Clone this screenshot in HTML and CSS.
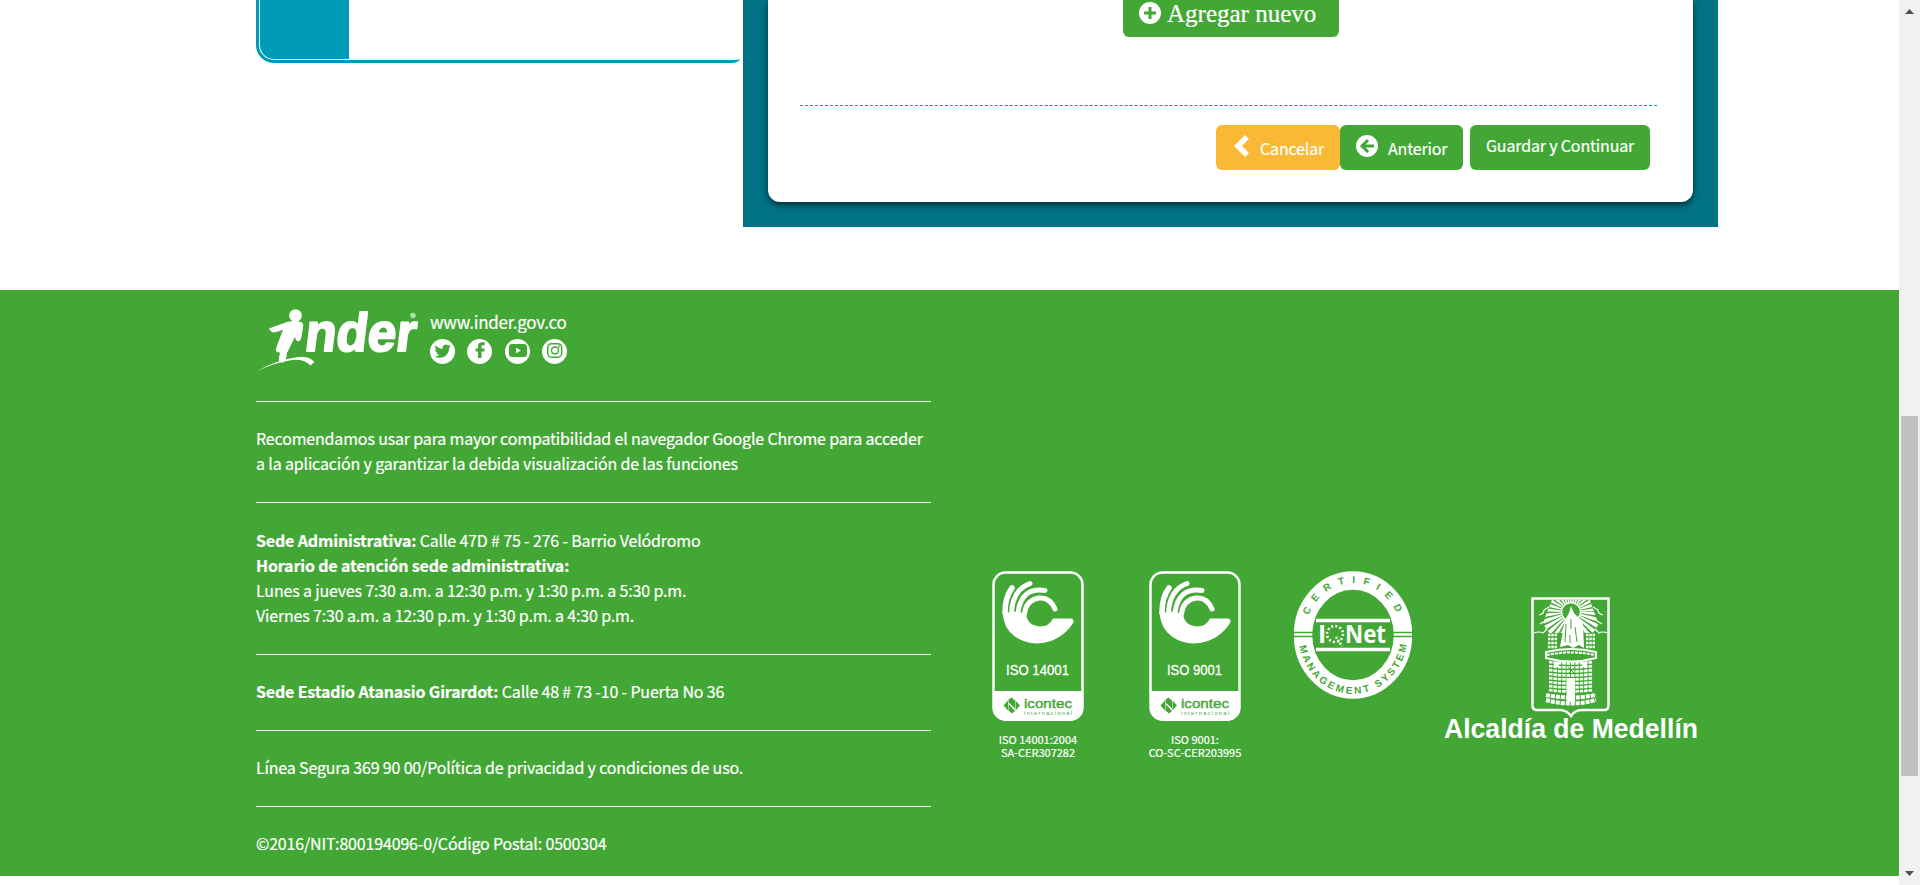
FILE: index.html
```html
<!DOCTYPE html>
<html lang="es">
<head>
<meta charset="utf-8">
<title>Inder Medellín</title>
<link rel="stylesheet" href="styles.css">
</head>
<body>
<div class="page">
  <main class="main">
    <aside class="steps"><div class="steps-box"><div class="steps-tab"></div></div></aside>
    <section class="panel">
      <div class="card">
        <div class="add-row">
          <button class="btn btn-add">
            <svg class="ico" viewBox="0 0 22 22"><circle cx="11" cy="11" r="11" fill="#fff"/><path d="M11 5v12M5 11h12" stroke="#43a736" stroke-width="3"/></svg>
            <span class="t-add">Agregar nuevo</span>
          </button>
        </div>
        <div class="actions">
          <button class="btn btn-cancel">
            <svg class="chev" viewBox="0 0 16 24"><path d="M13 3L4 12l9 9" fill="none" stroke="#fff" stroke-width="5.500"/></svg>
            <span>Cancelar</span>
          </button>
          <button class="btn btn-prev">
            <svg class="ico" viewBox="0 0 22 22"><circle cx="11" cy="11" r="11" fill="#fff"/><path d="M18 11H6M12 5l-6 6 6 6" fill="none" stroke="#43a736" stroke-width="3"/></svg>
            <span>Anterior</span>
          </button>
          <button class="btn btn-save"><span>Guardar y Continuar</span></button>
        </div>
      </div>
    </section>
  </main>
  <footer class="footer">
    <div class="info">
      <div class="brand">
        <svg class="logo" viewBox="0 0 160 64">
          <text transform="translate(47.500 41.500) skewX(-7)" class="logo-name" textLength="111" lengthAdjust="spacingAndGlyphs">nder</text>
          <circle cx="39.500" cy="6.500" r="6.300" fill="#fff"/>
          <path d="M13 22q0-3 4-4l14-5q8-2 14 0 3 1 2 6l-2 11q-2 4-5 1l-1-3-8 16q-1 9-4 9.500-5 .5-4-5l1-5q-5 0-4-4l7-19q-6 3-10 3-3-1-4-5.500z" fill="#fff"/>
          <path d="M0 62.500Q20 51 42 48q11-1 16.500 5l-4 3.500q-6-6.500-18-5.500Q20 53 0 62.500z" fill="#fff"/>
          <circle cx="157" cy="6.500" r="2.700" fill="#b5deaf"/>
        </svg>
        <div class="links">
          <span class="site">www.inder.gov.co</span>
          <div class="social">
            <svg viewBox="0 0 25 25"><circle cx="12.500" cy="12.500" r="12.500" fill="#fff"/><path transform="translate(4.500 4) scale(.68)" fill="#43a736" d="M23.950 4.570a10 10 0 0 1-2.820.780 4.960 4.960 0 0 0 2.160-2.730c-.950.560-2 .960-3.130 1.190a4.920 4.920 0 0 0-8.390 4.480C7.690 8.100 4.070 6.130 1.640 3.160a4.820 4.820 0 0 0-.670 2.480c0 1.710.870 3.210 2.190 4.100a4.900 4.900 0 0 1-2.230-.620v.060a4.920 4.920 0 0 0 3.950 4.830 5 5 0 0 1-2.210.090 4.940 4.940 0 0 0 4.600 3.420A9.870 9.870 0 0 1 0 19.540a13.990 13.990 0 0 0 7.550 2.210c9.050 0 14-7.500 14-13.980v-.640a9.940 9.940 0 0 0 2.400-2.560z"/></svg>
            <svg viewBox="0 0 25 25"><circle cx="12.500" cy="12.500" r="12.500" fill="#fff"/><path fill="#43a736" d="M11 19v-6.500H8.500V9.500H11V7.500c0-3 1.500-4.300 4-4.300h2.800v3H16c-1 0-1.500.500-1.500 1.400v1.900h3.200l-.400 3h-2.800V19z"/></svg>
            <svg viewBox="0 0 25 25"><circle cx="12.500" cy="12.500" r="12.500" fill="#fff"/><rect x="4" y="5" width="18" height="13" rx="3" fill="#43a736"/><path d="M11 8.800l5 2.700-5 2.800z" fill="#fff"/></svg>
            <svg viewBox="0 0 25 25"><circle cx="12.500" cy="12.500" r="12.500" fill="#fff"/><g fill="none" stroke="#43a736" stroke-width="1.500"><rect x="5.700" y="4.700" width="14" height="13.500" rx="4"/><circle cx="13" cy="11.500" r="3.500"/></g><circle cx="17" cy="7.500" r="1" fill="#43a736"/></svg>
          </div>
        </div>
      </div>
      <hr>
      <p>Recomendamos usar para mayor compatibilidad el navegador Google Chrome para acceder<br>a la aplicación y garantizar la debida visualización de las funciones</p>
      <hr>
      <p class="address"><b>Sede Administrativa:</b> Calle 47D # 75 - 276 - Barrio Velódromo<br><b>Horario de atención sede administrativa:</b><br>Lunes a jueves 7:30 a.m. a 12:30 p.m. y 1:30 p.m. a 5:30 p.m.<br>Viernes 7:30 a.m. a 12:30 p.m. y 1:30 p.m. a 4:30 p.m.</p>
      <hr>
      <p><b>Sede Estadio Atanasio Girardot:</b> Calle 48 # 73 -10 - Puerta No 36</p>
      <hr>
      <p>Línea Segura 369 90 00/Política de privacidad y condiciones de uso.</p>
      <hr>
      <p>©2016/NIT:800194096-0/Código Postal: 0500304</p>
    </div>
    <div class="certs">
      <div class="cert">
        <svg class="badge" viewBox="0 0 92 150">
          <defs>
            <g id="icontec">
              <rect x="1.500" y="1.500" width="89" height="147" rx="12" fill="none" stroke="#fff" stroke-width="2.500"/>
              <path d="M1 120h90v17q-1 12-13 13H14q-12-1-13-13z" fill="#fff"/>
              <path d="M10.500 41q1 17 13 25 12 8 27 6 19-3 30-19 3-5-2-5.500H61q-4 8-13 8-13-1-14-13l-6-1-6-1-6 1z" fill="#fff"/>
              <g fill="none" stroke="#fff" stroke-linecap="round">
                <path d="M20 17Q13 26 13 42" stroke-width="5.500"/>
                <path d="M38 12.500Q20 19 19.500 43" stroke-width="5"/>
                <path d="M53 19.500Q29 16 26 42" stroke-width="5"/>
                <path d="M63 38Q58 26 47 27 34 29 32.500 43" stroke-width="5"/>
              </g>
              <g fill="#43a736"><path d="M11.500 134.500l4.500-5v10zM28 134.500l-4.500-5v10z"/><path d="M16.500 128.500l3-2 3.500 3v8l-6.500-6zM16.500 133l6.500 7-3 2.500-3.500-3z"/></g>
            </g>
          </defs>
          <use href="#icontec"/>
          <text x="32" y="136.500" class="bt-name" textLength="48" lengthAdjust="spacingAndGlyphs">icontec</text>
          <text x="32" y="144" class="bt-sub" textLength="48">internacional</text>
          <text x="14" y="104" class="bt-iso" textLength="63" lengthAdjust="spacingAndGlyphs">ISO 14001</text>
        </svg>
        <span class="cap">ISO 14001:2004<br>SA-CER307282</span>
      </div>
      <div class="cert">
        <svg class="badge" viewBox="0 0 92 150">
          <use href="#icontec"/>
          <text x="32" y="136.500" class="bt-name" textLength="48" lengthAdjust="spacingAndGlyphs">icontec</text>
          <text x="32" y="144" class="bt-sub" textLength="48">internacional</text>
          <text x="18" y="104" class="bt-iso" textLength="55" lengthAdjust="spacingAndGlyphs">ISO 9001</text>
        </svg>
        <span class="cap">ISO 9001:<br>CO-SC-CER203995</span>
      </div>
      <svg class="iqnet" viewBox="0 0 118 128">
        <defs>
          <path id="arcTop" d="M11 64a48 52 0 0 1 96 0"/>
          <path id="arcBottom" d="M4.500 64a54.500 59 0 0 0 109 0"/>
        </defs>
        <ellipse cx="59" cy="64" rx="50" ry="54.500" fill="none" stroke="#fff" stroke-width="18.500"/>
        <path d="M0 61.500h19M0 65.500h19M99 61.500h19M99 65.500h19" stroke="#43a736" stroke-width="1.500"/>
        <path d="M22 49.500h74M22 78.500h74" stroke="#fff" stroke-width="3.500"/>
        <text class="ring"><textPath href="#arcTop" startOffset="20" textLength="114">CERTIFIED</textPath></text>
        <text class="ring"><textPath href="#arcBottom" startOffset="11" textLength="157">MANAGEMENT SYSTEM</textPath></text>
        <text x="24" y="72" class="iq">I</text>
        <text x="51" y="72" class="iq" textLength="41" lengthAdjust="spacingAndGlyphs">Net</text>
        <circle cx="41" cy="63" r="8" fill="none" stroke="#fff" stroke-width="2.500" stroke-dasharray="2 2.200"/>
        <path d="M42 66l6 9" stroke="#fff" stroke-width="2.500" stroke-dasharray="2 1.500"/>
      </svg>
      <svg class="city" viewBox="0 0 258 150">
        <defs><clipPath id="rays"><path d="M108 3h38l7 20 3 9-6 4H103l-5-4 3-12z"/></clipPath></defs>
        <g fill="none" stroke="#fff">
          <path d="M88.500 1.500h76v107q0 4-4 4.500h-22q-8 0-11.500 6-4-6-12-6h-22.500q-4-.5-4-4.500z" stroke-width="2.500"/>
          <circle cx="127" cy="15" r="20" stroke-width="20" stroke-dasharray="2.700 1.490" clip-path="url(#rays)"/>
          <circle cx="127" cy="15" r="9.500" stroke-width="1.500"/>
          <path d="M90 36q5-2 9 0l4-4M95 18q5-1 5-5l5-3M96 27l5-3M164 36q-6-2-9 0l-4-4M159 18q-5-1-5-5l-5-3M158 27l-5-3" stroke-width="1.200"/>
          <path d="M104 38h9M104 42h9M104 46h9M104 50h9M142 38h9M142 42h9M142 46h9M142 50h9" stroke-width="2.600" stroke-dasharray="2.500 .8"/>
          <path d="M102 55q25-6 50 0v6q-25 7-50 0z" stroke-width="2"/>
          <path d="M103 58q24-5 48 0" stroke-width="2" stroke-dasharray="3 1"/>
          <path d="M105 65q22 3 44 0M105 69q22 3 44 0M105 73q22 3 44 0M105 77q22 3 44 0M105 81q22 3 44 0M105 85q22 3 44 0M105 89q22 3 44 0M105 93q22 3 44 0" stroke-width="2.600" stroke-dasharray="3.500 .9"/>
          <path d="M102 98q25 5 50 0M102 103q25 7 50 0" stroke-width="4" stroke-dasharray="4 1"/>
        </g>
        <path d="M116 50l5-27 4-7 2-7 3 7 5 5 4 6 1 24-5-3-6 3-5-3zM110 65h5v5h-5zM138 65h5v5h-5zM122.500 81h8.500v24h-8.500z" fill="#fff"/>
        <path d="M122 27l-1 18M127 22v10M131 30l2 15M126 38v8M124 70l7 7M131 70l-7 7" stroke="#43a736" stroke-width="1"/>
        <text x="0" y="141.300" class="city-name" textLength="254" lengthAdjust="spacingAndGlyphs">Alcaldía de Medellín</text>
      </svg>
    </div>
  </footer>
</div>
<div class="scroll">
  <svg viewBox="0 0 9 5" width="9" height="5"><path d="M4.500 0L9 5H0z" fill="#505050"/></svg>
  <div class="thumb"></div>
  <svg viewBox="0 0 9 5" width="9" height="5"><path d="M0 0h9L4.500 5z" fill="#505050"/></svg>
</div>
</body>
</html>
```
FILE: styles.css
```css
* { box-sizing: border-box; }
body { margin: 0; width: 1920px; height: 885px; overflow: hidden; display: flex; background: #fff; font-family: "Noto Sans CJK JP", "Noto Sans CJK SC", sans-serif; font-size: 16px; color: #fff; }
svg { display: block; flex: none; }
.page { width: 1899px; }
.main { display: flex; height: 290px; padding-left: 256px; }
.steps { width: 487px; }
.steps-box { width: 484px; height: 63px; padding: 0 0 1px 1px; border: solid #009bb4; border-width: 0 0 3px 3px; border-radius: 0 0 9px 18px / 0 0 4px 18px; }
.steps-tab { width: 89px; height: 59px; background: #009bb4; border-bottom-left-radius: 14px; }
.panel { width: 975px; height: 227px; padding: 0 25px 25px; background: #007385; }
.card { height: 202px; padding: 0 36px 0 32px; background: #fff; border-radius: 0 0 12px 12px; box-shadow: 0 3px 6px rgba(0,0,0,.6); }
.add-row { height: 106px; padding-left: 323px; border-bottom: 1px dashed #009bb4; }
.btn { display: flex; border: 0; border-radius: 6px; background: #43a736; color: #fff; font: 16px/24px "Noto Sans CJK JP", sans-serif; letter-spacing: -.160px; -webkit-text-stroke: .2px #fff; white-space: nowrap; height: 45px; }
.btn-add { width: 216px; height: 37px; padding: 2px 0 0 16px; border-radius: 0 0 6px 6px; gap: 6px; }
.ico { width: 22px; height: 22px; }
.t-add { font: 25px/24px "Liberation Serif", serif; letter-spacing: 0; }
.actions { display: flex; justify-content: flex-end; padding: 19px 7px 0 0; }
.btn-cancel { width: 124px; padding: 9px 0 0 18px; gap: 10px; background: #f9b934; }
.btn-prev { width: 123px; padding: 10px 0 0 16px; gap: 10px; }
.btn-save { width: 180px; margin-left: 7px; padding: 8px 0 0 16px; }
.btn-cancel span { padding-top: 2px; }
.btn-prev span { padding-top: 1px; }
.chev { width: 16px; height: 24px; }
.footer { display: flex; height: 586px; padding-left: 256px; background: #43a736; -webkit-text-stroke: .2px #fff; }
.info { width: 675px; }
.info hr { height: 1px; margin: 25px 0; border: 0; background: #fff; }
.info p { margin: -1px 0 26px; font-size: 16px; line-height: 25.140px; letter-spacing: -.165px; white-space: nowrap; }
.info .address { margin: -.4px 0 25.400px; }
.brand { display: flex; height: 86px; padding-top: 19px; gap: 14px; }
.logo { width: 160px; height: 64px; overflow: visible; }
.logo-name { font: bold 54px/1 "Liberation Sans", sans-serif; fill: #fff; stroke: #fff; stroke-width: 2px; stroke-linejoin: round; -webkit-text-stroke: 2px #fff; }
.site { display: block; height: 30px; font-size: 17px; line-height: 25px; letter-spacing: -.280px; }
.social { display: flex; gap: 12.300px; }
.social svg { width: 25px; height: 25px; }
.certs { display: flex; padding: 281px 0 0 61px; }
.certs text { -webkit-text-stroke: 0; }
.cert { width: 92px; margin-right: 65px; display: flex; flex-direction: column; align-items: center; }
.badge { width: 92px; height: 150px; }
.cap { margin-top: 12px; font-size: 11px; line-height: 13px; text-align: center; white-space: nowrap; }
.bt-name { font: 13px/1 "Liberation Sans", sans-serif; fill: #43a736; stroke: #43a736; stroke-width: .4px; }
.bt-sub { font: 5.500px/1 "Liberation Sans", sans-serif; fill: #43a736; }
.bt-iso { font: 15px "Liberation Sans", sans-serif; fill: #fff; stroke: #fff; stroke-width: .3px; }
.iqnet { width: 118px; height: 128px; margin-left: -12px; }
.ring { font: bold 10px "Liberation Sans", sans-serif; fill: #43a736; }
.iq { font: bold 25px "Open Sans", sans-serif; fill: #fff; }
.city { width: 258px; height: 150px; margin: 26px 0 0 32px; overflow: visible; }
.city-name { font: bold 27px "Liberation Sans", sans-serif; fill: #fff; }
.scroll { width: 21px; height: 885px; padding: 9px 0; display: flex; flex-direction: column; align-items: center; background: #f1f1f1; }
.thumb { width: 17px; height: 360px; margin: 402px 0 95px; background: #c1c1c1; }
```
